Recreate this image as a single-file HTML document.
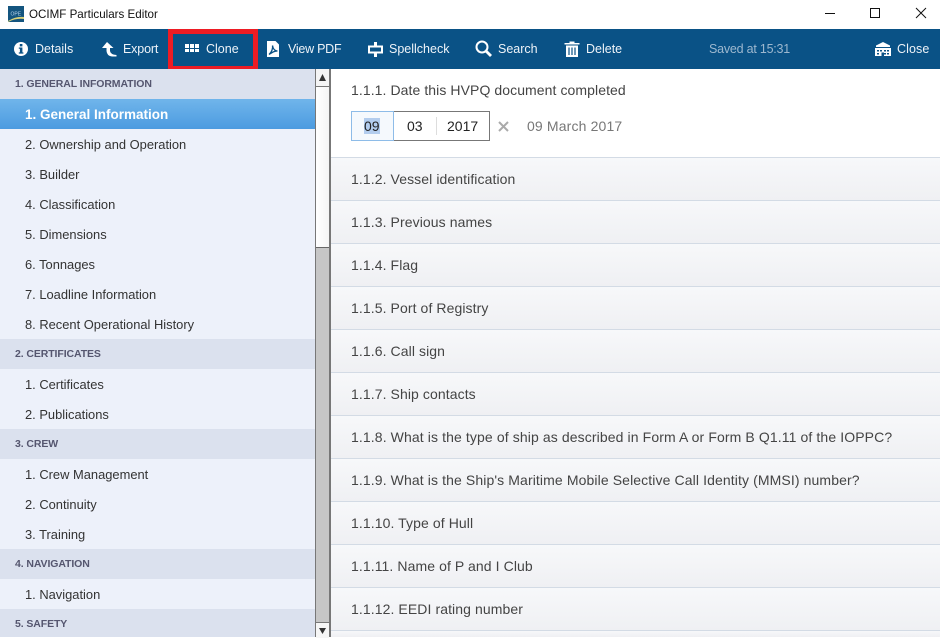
<!DOCTYPE html>
<html><head><meta charset="utf-8"><style>
html,body{margin:0;padding:0;width:940px;height:637px;overflow:hidden;background:#fff;font-family:"Liberation Sans",sans-serif}
div,span,svg{position:absolute;white-space:nowrap}
.tb{top:41px;font-size:12.5px;color:#eef3f8;line-height:16px}
.ic{top:40px;width:18px;height:18px;fill:#fff}
.h{left:0;width:315px;height:30px;background:#dbe1ee;color:#55566f;font-weight:bold;font-size:10.5px;letter-spacing:-.1px;line-height:31px;text-indent:15px}
.i{left:0;width:315px;height:30px;background:#edf1fa;color:#333;font-size:12.9px;line-height:31px;text-indent:25px}
.r{left:331px;width:609px;height:42px;border-top:1px solid #d3dbe5;background:linear-gradient(#f7f8fa,#eff0f3);color:#444;font-size:14px;letter-spacing:.09px;line-height:43px;text-indent:20px}
</style></head><body>
<svg style="left:8px;top:6px" width="16" height="16" viewBox="0 0 16 16"><rect width="16" height="16" fill="#14557f"/><path d="M0 15Q8 10 16 11V13Q8 12 0 16Z" fill="#d9d27a"/><text x="2.5" y="9.5" font-size="5" fill="#b8d4ea" font-family="Liberation Sans">OPE</text></svg>
<div style="left:29px;top:7px;font-size:11.6px;line-height:16px;color:#111">OCIMF Particulars Editor</div>
<svg style="left:825px;top:6px" width="110" height="16" fill="none" stroke="#111" stroke-width="1"><path d="M0 7.500H10"/><rect x="45.500" y="2.500" width="9" height="9"/><path d="M91 2L101 12M101 2L91 12"/></svg>

<div style="left:0;top:29px;width:940px;height:40px;background:#0a5286"></div>
<svg class="ic" style="left:13px;top:41px;width:16px;height:16px" viewBox="0 0 16 16"><circle cx="8" cy="8" r="7"/><rect x="6.800" y="3" width="2.600" height="2.400" fill="#0a5286"/><path d="M5.800 6.500H9.400V11.400H10.400V12.600H5.800V11.400H6.900V7.700H5.800Z" fill="#0a5286"/></svg>
<div class="tb" style="left:35px">Details</div>
<svg class="ic" style="left:102px;top:42px;width:15px;height:15px" viewBox="0 0 15 15"><path d="M5 0L11.500 6H8V9Q8.500 12.500 14.500 13V14.500H10Q5 14 4.500 9V6H0Z"/></svg>
<div class="tb" style="left:123px;letter-spacing:-.15px">Export</div>
<svg class="ic" style="left:185px;top:44px;width:14px;height:8px" viewBox="0 0 14 8" shape-rendering="crispEdges"><path d="M0 0h4v4H0zM5 0h4v4H5zM10 0h4v4h-4zM0 5h4v3H0zM5 5h4v3H5zM10 5h4v3h-4z"/></svg>
<div class="tb" style="left:206px">Clone</div>
<div style="left:168px;top:29px;width:80px;height:32px;border:5px solid #ed1c24"></div>
<svg class="ic" style="left:267px;top:41px;width:13px;height:16px" viewBox="0 0 13 16"><path d="M0 0H8.500L12 3.500V16H0Z"/><path d="M2 13.500C5 11 6 7 5.500 4.500C6 8 8 10 10.500 10C7 10 5 11.500 2 13.500Z" fill="none" stroke="#0a5286" stroke-width="1.300"/></svg>
<div class="tb" style="left:288px;letter-spacing:-.25px">View PDF</div>
<svg class="ic" style="left:368px;top:42px;width:15px;height:15px" viewBox="0 0 15 15"><path d="M6 0h3v3.500h6V11.500H9V15H6V11.500H0V3.500h6Z"/><rect x="2" y="5.500" width="11" height="4" fill="#0a5286"/></svg>
<div class="tb" style="left:389px">Spellcheck</div>
<svg class="ic" style="left:475px;top:40px;width:18px;height:18px" viewBox="0 0 18 18"><circle cx="7" cy="7" r="5.500" fill="none" stroke="#fff" stroke-width="2"/><path d="M11 11L16 16" stroke="#fff" stroke-width="2.800" fill="none"/></svg>
<div class="tb" style="left:498px">Search</div>
<svg class="ic" style="left:564px;top:41px;width:16px;height:16px" viewBox="0 0 16 16"><path d="M5.500 2V0.500H10.500V2H15.500V3.500H0.500V2ZM2 4.500H14V16H2Z"/><path d="M5 6.500V14M8 6.500V14M11 6.500V14" stroke="#0a5286" stroke-width="1.200"/></svg>
<div class="tb" style="left:586px">Delete</div>
<div class="tb" style="left:709px;color:#9db8cf;letter-spacing:-.22px">Saved at 15:31</div>
<svg class="ic" style="left:875px;top:42px;width:16px;height:14px" viewBox="0 0 16 14"><path d="M8 0L15 3.500V5H1V3.500ZM0 6H16V14H0Z"/><path d="M2 8h2v1.500H2zM5 8h2v1.500H5zM9 8h2v1.500H9zM12 8h2v1.500h-2zM2 11h2v1.500H2zM12 11h2v1.500h-2zM9 11h2v1.500H9zM6.500 10.500h2.500V14H6.500z" fill="#0a5286"/></svg>
<div class="tb" style="left:897px;letter-spacing:.1px">Close</div>

<div class="h" style="top:69px">1. GENERAL INFORMATION</div>
<div class="i" style="top:99px;background:linear-gradient(#70b5eb,#4c9be0);color:#fff;font-weight:bold;font-size:13.500px">1. General Information</div>
<div class="i" style="top:129px">2. Ownership and Operation</div>
<div class="i" style="top:159px">3. Builder</div>
<div class="i" style="top:189px">4. Classification</div>
<div class="i" style="top:219px">5. Dimensions</div>
<div class="i" style="top:249px">6. Tonnages</div>
<div class="i" style="top:279px">7. Loadline Information</div>
<div class="i" style="top:309px">8. Recent Operational History</div>
<div class="h" style="top:339px">2. CERTIFICATES</div>
<div class="i" style="top:369px">1. Certificates</div>
<div class="i" style="top:399px">2. Publications</div>
<div class="h" style="top:429px">3. CREW</div>
<div class="i" style="top:459px">1. Crew Management</div>
<div class="i" style="top:489px">2. Continuity</div>
<div class="i" style="top:519px">3. Training</div>
<div class="h" style="top:549px">4. NAVIGATION</div>
<div class="i" style="top:579px">1. Navigation</div>
<div class="h" style="top:609px;height:28px">5. SAFETY</div>

<div style="left:315px;top:69px;width:13px;height:568px;background:#c6c6c6;border-left:1px solid #777;border-right:2px solid #777"></div>
<div style="left:316px;top:69px;width:13px;height:17px;background:#f4f4f4;border-bottom:1px solid #777"></div>
<div style="left:316px;top:87px;width:13px;height:160px;background:linear-gradient(90deg,#fff,#f4f4f4);border-bottom:1px solid #666"></div>
<div style="left:316px;top:622px;width:13px;height:15px;background:#f6f6f6;border-top:1px solid #777"></div>
<svg style="left:319px;top:74px" width="7" height="7"><path d="M3.500 0L7 7H0Z" fill="#333"/></svg>
<svg style="left:319px;top:628px" width="7" height="6"><path d="M0 0H7L3.500 6Z" fill="#333"/></svg>

<div style="left:351px;top:82px;font-size:14px;letter-spacing:.08px;line-height:16px;color:#444">1.1.1. Date this HVPQ document completed</div>
<div style="left:351px;top:111px;width:137px;height:28px;border:1px solid #777;background:#fff"></div>
<div style="left:351px;top:111px;width:41px;height:28px;border:1px solid #8ebce8;background:#f5f9fd"></div>
<div style="left:436px;top:117px;width:1px;height:18px;background:#ddd"></div>
<div style="left:364px;top:118px;width:16px;height:16px;background:#b3cdee"></div>
<div style="left:364px;top:118px;font-size:14px;line-height:16px;color:#222">09</div>
<div style="left:407px;top:118px;font-size:14px;line-height:16px;color:#222">03</div>
<div style="left:447px;top:118px;font-size:14px;line-height:16px;color:#222">2017</div>
<svg style="left:498px;top:121px" width="11" height="11"><path d="M1 1L10 10M10 1L1 10" stroke="#aaa" stroke-width="2"/></svg>
<div style="left:527px;top:118px;font-size:14px;letter-spacing:.15px;line-height:16px;color:#777">09 March 2017</div>

<div class="r" style="top:157px">1.1.2. Vessel identification</div>
<div class="r" style="top:200px">1.1.3. Previous names</div>
<div class="r" style="top:243px">1.1.4. Flag</div>
<div class="r" style="top:286px">1.1.5. Port of Registry</div>
<div class="r" style="top:329px">1.1.6. Call sign</div>
<div class="r" style="top:372px">1.1.7. Ship contacts</div>
<div class="r" style="top:415px;letter-spacing:.11px">1.1.8. What is the type of ship as described in Form A or Form B Q1.11 of the IOPPC?</div>
<div class="r" style="top:458px;letter-spacing:.11px">1.1.9. What is the Ship's Maritime Mobile Selective Call Identity (MMSI) number?</div>
<div class="r" style="top:501px">1.1.10. Type of Hull</div>
<div class="r" style="top:544px">1.1.11. Name of P and I Club</div>
<div class="r" style="top:587px">1.1.12. EEDI rating number</div>
<div class="r" style="top:630px;height:6px"></div>
</body></html>
